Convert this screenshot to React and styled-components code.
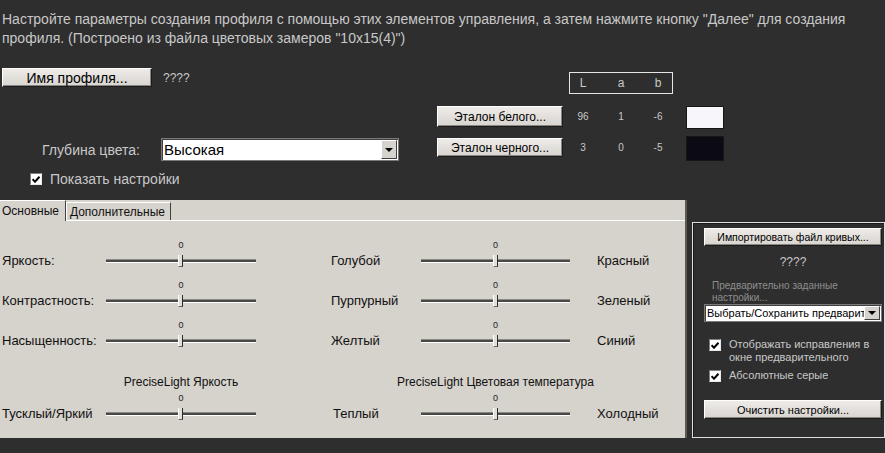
import React from "react";
import styled, { createGlobalStyle } from "styled-components";

const GlobalStyle = createGlobalStyle`
  html, body {
    margin: 0;
    padding: 0;
    background: #2e2e2e;
  }
  body {
    width: 885px;
    height: 453px;
    overflow: hidden;
    font-family: "Liberation Sans", Arial, sans-serif;
  }
`;

const Page = styled.div`
  display: flex;
  flex-direction: column;
  width: 885px;
  height: 453px;
  color: #c8c8c8;
`;

const Intro = styled.p`
  margin: 0;
  box-sizing: border-box;
  height: 64px;
  padding: 10px 0 0 2px;
  font-size: 14px;
  line-height: 19px;
`;

/* top block: profile name, white/black points, colour depth */
const Setup = styled.div`
  display: grid;
  grid-template-columns: 437px 132px 117px 38px;
  grid-template-rows: 36px 32px 33px 35px;
`;

const Cell = styled.div`
  grid-column: ${(p) => p.col};
  grid-row: ${(p) => p.row};
  margin-top: ${(p) => p.top || 0}px;
  display: flex;
  align-items: center;
  align-self: start;
  gap: ${(p) => p.gap || 0}px;
  padding-left: ${(p) => p.pad || 0}px;
`;

const Button = styled.button`
  box-sizing: border-box;
  width: ${(p) => p.w}px;
  height: ${(p) => p.h || 19}px;
  padding: 0;
  background: linear-gradient(#eeebe8, #d8d4d0);
  border: 1px solid;
  border-color: #ffffff #1c1c1c #1c1c1c #ffffff;
  box-shadow: inset -1px -1px 0 #8a8682;
  font-family: inherit;
  font-size: ${(p) => p.fs || 12}px;
  color: #000;
  text-align: center;
  white-space: nowrap;
  cursor: default;
`;

const Muted = styled.span`
  font-size: 12px;
  color: #c8c8c8;
`;

const Lab = styled.div`
  grid-column: 3;
  grid-row: ${(p) => p.row};
  margin-top: ${(p) => p.top || 0}px;
  box-sizing: border-box;
  width: 104px;
  height: ${(p) => p.h || 22}px;
  display: grid;
  grid-template-columns: 26px 50px 24px;
  justify-items: center;
  align-items: center;
  border: ${(p) => (p.framed ? "1px solid #e6e6e6" : "1px solid transparent")};
  font-size: ${(p) => (p.framed ? 12 : 10)}px;
  color: #c8c8c8;
`;

const Swatch = styled.div`
  grid-column: 4;
  grid-row: ${(p) => p.row};
  margin-top: ${(p) => p.top}px;
  box-sizing: border-box;
  width: 38px;
  height: ${(p) => p.h}px;
  background: ${(p) => p.color};
  border: 1px solid #161616;
`;

const DepthLabel = styled.span`
  width: 119px;
  font-size: 14px;
  color: #c8c8c8;
`;

const Select = styled.div`
  box-sizing: border-box;
  flex: none;
  display: flex;
  align-items: center;
  width: ${(p) => p.w}px;
  height: ${(p) => p.h}px;
  background: #fff;
  border: 1px solid #7a7a7a;
  box-shadow: inset 1px 1px 0 #404040;
  color: #000;
  font-size: ${(p) => p.fs}px;
  overflow: hidden;
`;

const SelectText = styled.span`
  flex: 1;
  padding-left: 2px;
  white-space: nowrap;
  overflow: hidden;
`;

const Arrow = styled.span`
  box-sizing: border-box;
  flex: none;
  width: 16px;
  height: calc(100% - 2px);
  margin-right: 1px;
  display: flex;
  align-items: center;
  justify-content: center;
  background: #d6d2ce;
  border: 1px solid;
  border-color: #fff #404040 #404040 #fff;
  &::after {
    content: "";
    border-left: 4px solid transparent;
    border-right: 4px solid transparent;
    border-top: 4px solid #000;
  }
`;

const Check = styled.span`
  box-sizing: border-box;
  flex: none;
  width: 12px;
  height: 12px;
  background: #fff;
  border: 1px solid;
  border-color: #808080 #e8e8e8 #e8e8e8 #808080;
  display: flex;
  align-items: center;
  justify-content: center;
`;

const CheckMark = () => (
  <svg width="8" height="7" viewBox="0 0 8 7">
    <path d="M0.5 3.2 L3 5.7 L7.5 0.8" fill="none" stroke="#000" strokeWidth="2" />
  </svg>
);

const CheckText = styled.div`
  font-size: ${(p) => p.fs || 14}px;
  line-height: ${(p) => p.lh || 16}px;
  max-height: ${(p) => (p.max ? `${p.max}px` : "none")};
  margin-top: ${(p) => p.shift || 0}px;
  overflow: hidden;
  color: #c8c8c8;
`;

/* lower part: tabbed settings panel and the curves box */
const Lower = styled.div`
  display: flex;
  height: 238px;
`;

const Panel = styled.div`
  box-sizing: border-box;
  width: 687px;
  height: 238px;
  background: #d6d2cc;
  border-right: 2px solid #5c5854;
  display: flex;
  flex-direction: column;
  color: #111;
`;

const TabStrip = styled.div`
  display: flex;
  align-items: flex-end;
  height: 21px;
  border-bottom: 1px solid #ffffff;
  box-sizing: border-box;
`;

const Tab = styled.div`
  box-sizing: border-box;
  height: ${(p) => (p.active ? 21 : 18)}px;
  margin-bottom: ${(p) => (p.active ? -1 : 0)}px;
  padding: 0 ${(p) => (p.active ? 6 : 5)}px 0 ${(p) => (p.active ? 2 : 3)}px;
  display: flex;
  align-items: center;
  background: #d6d2cc;
  border-top: 1px solid #ffffff;
  border-left: ${(p) => (p.active ? 0 : 1)}px solid #ffffff;
  border-right: 1px solid #404040;
  font-size: 12px;
  color: #111;
`;

const SliderGrid = styled.div`
  display: grid;
  grid-template-columns: 103px 152px 163px 151px 1fr;
  grid-template-rows: 40px 40px 40px 39px 34px;
  align-items: end;
  padding: 10px 0 0 2px;
`;

const RowLabel = styled.span`
  grid-column: ${(p) => p.col || "auto"};
  height: 20px;
  line-height: 20px;
  font-size: 13px;
  padding-left: ${(p) => p.pad || 0}px;
  white-space: nowrap;
`;

const Title = styled.div`
  grid-column: ${(p) => p.col};
  display: flex;
  justify-content: center;
  line-height: 16px;
  font-size: 12px;
  white-space: nowrap;
`;

const SliderBox = styled.div`
  display: flex;
  flex-direction: column;
  align-items: center;
  width: 100%;
`;

const SliderValue = styled.span`
  height: 12px;
  line-height: 12px;
  font-size: 9px;
  color: #222;
`;

const Track = styled.div`
  position: relative;
  width: 100%;
  height: 20px;
  &::before {
    content: "";
    position: absolute;
    left: 1px;
    right: 1px;
    top: 8px;
    height: 2px;
    background: #4a4846;
    border-top: 1px solid #8c8884;
    border-bottom: 1px solid #ffffff;
  }
`;

const Thumb = styled.span`
  position: absolute;
  left: calc(50% - 3px);
  top: 4px;
  box-sizing: border-box;
  width: 5px;
  height: 12px;
  background: #e2deda;
  border-left: 1px solid #ffffff;
  border-right: 1px solid #2a2a2a;
  border-bottom: 1px solid #6a6662;
`;

const Slider = () => (
  <SliderBox>
    <SliderValue>0</SliderValue>
    <Track>
      <Thumb />
    </Track>
  </SliderBox>
);

const CurvesBox = styled.div`
  box-sizing: border-box;
  width: 193px;
  height: 216px;
  margin: 22px 0 0 5px;
  border: 1px solid #dedede;
  box-shadow: inset 1px 1px 0 #1a1a1a;
  padding: 5px 2px 0 11px;
  display: flex;
  flex-direction: column;
`;

const Unknown = styled.div`
  width: 178px;
  margin-top: 8px;
  text-align: center;
  font-size: 12px;
  line-height: 16px;
`;

const PresetLabel = styled.div`
  margin-top: 10px;
  padding-left: 8px;
  font-size: 10px;
  line-height: 12px;
  color: #8e8e8e;
`;

const OptionRow = styled.div`
  display: flex;
  align-items: flex-start;
  gap: 8px;
  padding-left: 5px;
  margin-top: ${(p) => p.top}px;
`;

const Spacer = styled.div`
  flex: 1;
`;

const sliderRows = [
  ["Яркость:", "Голубой", "Красный"],
  ["Контрастность:", "Пурпурный", "Зеленый"],
  ["Насыщенность:", "Желтый", "Синий"],
];

export default function App() {
  return (
    <>
      <GlobalStyle />
      <Page>
        <Intro>
          Настройте параметры создания профиля с помощью этих элементов управления, а затем
          нажмите кнопку "Далее" для создания профиля. (Построено из файла цветовых замеров
          "10x15(4)")
        </Intro>

        <Setup>
          <Cell col={1} row={1} top={4} gap={11} pad={2}>
            <Button w={150} fs={14}>Имя профиля...</Button>
            <Muted>????</Muted>
          </Cell>
          <Lab row={1} top={8} framed>
            <span>L</span>
            <span>a</span>
            <span>b</span>
          </Lab>

          <Cell col={2} row={2} top={6}>
            <Button w={126} h={21}>Эталон белого...</Button>
          </Cell>
          <Lab row={2} top={6} h={21}>
            <span>96</span>
            <span>1</span>
            <span>-6</span>
          </Lab>
          <Swatch row={2} top={6} h={23} color="#f7f7fb" />

          <Cell col={1} row={3} top={6} pad={42}>
            <DepthLabel>Глубина цвета:</DepthLabel>
            <Select w={238} h={23} fs={15}>
              <SelectText>Высокая</SelectText>
              <Arrow />
            </Select>
          </Cell>
          <Cell col={2} row={3} top={6}>
            <Button w={126}>Эталон черного...</Button>
          </Cell>
          <Lab row={3} top={6} h={19}>
            <span>3</span>
            <span>0</span>
            <span>-5</span>
          </Lab>
          <Swatch row={3} top={4} h={25} color="#0c0a13" />

          <Cell col={1} row={4} top={6} gap={8} pad={30}>
            <Check>
              <CheckMark />
            </Check>
            <CheckText>Показать настройки</CheckText>
          </Cell>
        </Setup>

        <Lower>
          <Panel>
            <TabStrip>
              <Tab active>Основные</Tab>
              <Tab>Дополнительные</Tab>
            </TabStrip>
            <SliderGrid>
              {sliderRows.map(([name, from, to]) => (
                <React.Fragment key={name}>
                  <RowLabel>{name}</RowLabel>
                  <Slider />
                  <RowLabel pad={74}>{from}</RowLabel>
                  <Slider />
                  <RowLabel pad={26}>{to}</RowLabel>
                </React.Fragment>
              ))}
              <Title col={2}>PreciseLight Яркость</Title>
              <Title col={4}>PreciseLight Цветовая температура</Title>
              <RowLabel col={1}>Тусклый/Яркий</RowLabel>
              <Slider />
              <RowLabel pad={76}>Теплый</RowLabel>
              <Slider />
              <RowLabel pad={26}>Холодный</RowLabel>
            </SliderGrid>
          </Panel>

          <CurvesBox>
            <Button w={178} h={18} fs={10.5}>Импортировать файл кривых...</Button>
            <Unknown>????</Unknown>
            <PresetLabel>
              Предварительно заданные
              <br />
              настройки...
            </PresetLabel>
            <Select w={178} h={18} fs={11}>
              <SelectText>Выбрать/Сохранить предварительно заданные</SelectText>
              <Arrow />
            </Select>
            <OptionRow top={17}>
              <Check>
                <CheckMark />
              </Check>
              <CheckText fs={11} lh={13} max={28} shift={-1}>
                Отображать исправления в окне предварительного просмотра
              </CheckText>
            </OptionRow>
            <OptionRow top={4}>
              <Check>
                <CheckMark />
              </Check>
              <CheckText fs={11} lh={13} shift={-1}>
                Абсолютные серые
              </CheckText>
            </OptionRow>
            <Spacer />
            <Button w={178} h={19} fs={11}>Очистить настройки...</Button>
            <Spacer />
          </CurvesBox>
        </Lower>
      </Page>
    </>
  );
}
